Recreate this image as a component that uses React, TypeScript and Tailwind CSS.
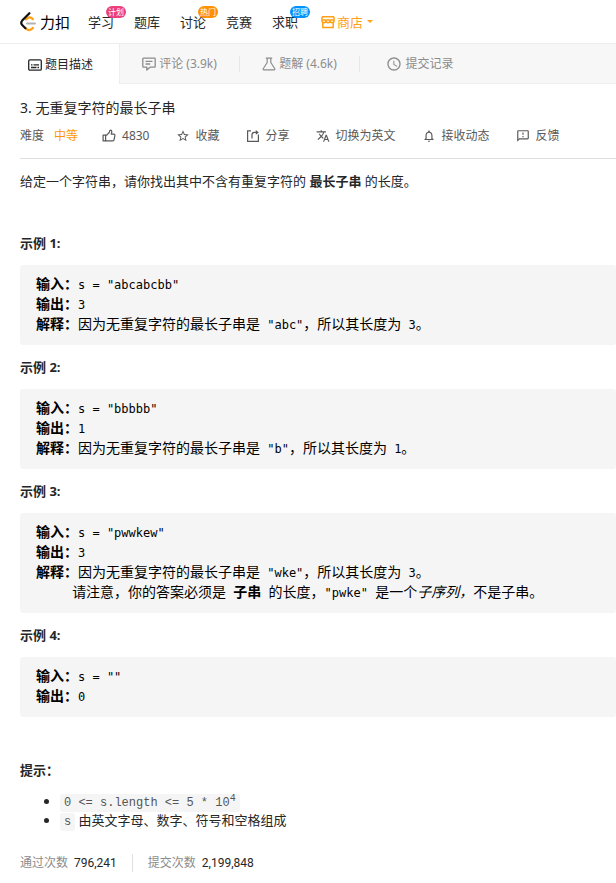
import React from 'react';
import { MdAccessTime, MdNotificationsNone, MdOutlineFeedback, MdStarBorder, MdTranslate } from 'react-icons/md';

function LogoMark() {
  return (
    <svg viewBox="0 0 16 20" className="w-4 h-5" fill="none" strokeWidth="2.2" strokeLinecap="round">
      <path d="M6 7.500l1.200-1.100c1.500-1.300 3.400-1.300 4.800 0l.8.8" stroke="#ffa116" />
      <path d="M5.200 15.700l1.200 1.100c1.800 1.500 4 1.400 5.400.1l1-1" stroke="#ffa116" />
      <path d="M7 11.500h8" stroke="#b3b3b3" strokeWidth="1.9" />
      <path d="M9.400 1.200L2.200 8.600c-1.200 1.400-1.200 3.100 0 4.500l3.200 3.100" stroke="#111" />
    </svg>
  );
}

function ShopIcon() {
  return (
    <svg viewBox="0 0 14 14" className="w-3.5 h-3.5" fill="none" stroke="currentColor" strokeWidth="1.5">
      <path d="M1 1.800h12M.8 5h12.400M1 1.800v4c0 1.200.8 1.900 1.900 1.900S4.800 7 4.800 6M13 1.800v4c0 1.200-.8 1.900-1.900 1.900S9.200 7 9.200 6M4.800 5v.8c0 1.200.9 1.900 2.200 1.900s2.200-.7 2.200-1.900V5" />
      <path d="M1.800 7.600v4.900h10.400V7.600" />
    </svg>
  );
}

function DescriptionIcon() {
  return (
    <svg viewBox="0 0 14 12" className="w-3.5 h-3" fill="none" stroke="currentColor" strokeWidth="1.3">
      <rect x=".7" y=".9" width="12.600" height="10.200" rx="1.200" />
      <path d="M3 5.900h1.500M5.500 5.900H11M3 8.500h5.500M9.500 8.500H11" />
    </svg>
  );
}

function CommentIcon() {
  return (
    <svg viewBox="0 0 14 14" className="w-3.5 h-3.5" fill="none" stroke="currentColor" strokeWidth="1.3" strokeLinejoin="round">
      <path d="M1.500 1.200h11c.4 0 .7.300.7.700v7.600c0 .4-.3.700-.7.700H8l-3.200 2.900v-2.900H1.500c-.4 0-.7-.3-.7-.7V1.900c0-.4.3-.7.7-.7z" />
      <path d="M3.500 4.400h7M3.500 7h4.700" />
    </svg>
  );
}

function FlaskIcon() {
  return (
    <svg viewBox="0 0 14 14" className="w-3.5 h-3.5" fill="none" stroke="currentColor" strokeWidth="1.2" strokeLinejoin="round">
      <path d="M3.800 1.200h6.400M5.200 1.200v4.300L1.200 11.800c-.3.500 0 1 .6 1h10.400c.6 0 .9-.5.6-1L8.800 5.500V1.200" />
    </svg>
  );
}

function LikeIcon() {
  return (
    <svg viewBox="0 0 14 14" className="w-3.5 h-3.5" fill="none" stroke="currentColor" strokeWidth="1.2" strokeLinejoin="round">
      <path d="M1.100 6.100h2.500v5.800H1.100z" />
      <path d="M3.600 6.200h1.100l2.500-2.700c.3-.4.400-.8.400-1.300 0-.8.500-1.100 1-1.100.8 0 1.200.7 1.200 1.600 0 .9-.3 1.700-.6 2.400h2.500c.8 0 1.300.6 1.200 1.300l-.8 4.300c-.1.700-.6 1.200-1.400 1.200H3.600" />
    </svg>
  );
}

function ShareIcon() {
  return (
    <svg viewBox="0 0 14 14" className="w-3.5 h-3.5" fill="none" stroke="currentColor" strokeWidth="1.2">
      <path d="M5 1.800H1.600v10.600h10.800V5.500" />
      <path d="M6 9.500V5.800c0-1.500.9-2.400 2.400-2.400h2.200" />
      <path d="M9.800 1l3 2.400-3 2.400z" fill="currentColor" stroke="none" />
    </svg>
  );
}

const navLinks = [
  { label: '学习', badge: '计划', color: 'bg-[#ec407a]' },
  { label: '题库' },
  { label: '讨论', badge: '热门', color: 'bg-[#ff9100]' },
  { label: '竞赛' },
  { label: '求职', badge: '招聘', color: 'bg-[#0091ff]' },
];

const tabs = [
  { label: '评论 (3.9k)', icon: <CommentIcon />, divider: true },
  { label: '题解 (4.6k)', icon: <FlaskIcon />, divider: true },
  { label: '提交记录', icon: <MdAccessTime className="w-4 h-4" />, divider: false },
];

const actions = [
  { label: '4830', icon: <LikeIcon /> },
  { label: '收藏', icon: <MdStarBorder className="w-3.5 h-3.5" /> },
  { label: '分享', icon: <ShareIcon /> },
  { label: '切换为英文', icon: <MdTranslate className="w-3.5 h-3.5" /> },
  { label: '接收动态', icon: <MdNotificationsNone className="w-3.5 h-3.5" /> },
  { label: '反馈', icon: <MdOutlineFeedback className="w-3.5 h-3.5" /> },
];

// Latin runs inside a code sample
function L({ children }: { children: React.ReactNode }) {
  return <span className="text-xs leading-none">{children}</span>;
}

function Example({ index, children }: { index: number; children: React.ReactNode }) {
  return (
    <section>
      <h2 className="h-11 flex items-center font-bold">示例 {index}:</h2>
      <pre className="bg-[#f5f5f5] rounded-[3px] pt-[9px] pb-[11px] pl-4 text-sm leading-5 text-black overflow-hidden font-['DejaVu_Sans_Mono','Noto_Sans_CJK_SC',monospace]">
        {children}
      </pre>
    </section>
  );
}

export default function App() {
  return (
    <div className="bg-white text-[#262626] text-[13px] leading-5 font-['Noto_Sans','Noto_Sans_CJK_SC',sans-serif]">
      <header className="h-11 flex items-center border-b border-[#eee] pl-5">
        <a href="#" className="flex items-center gap-1 w-[68px] text-[15px] text-black">
          <LogoMark />
          力扣
        </a>
        <nav className="flex items-center gap-5">
          {navLinks.map((item) => (
            <a key={item.label} href="#" className="relative">
              {item.label}
              {item.badge && (
                <span className={`absolute -top-1.5 left-[18px] h-3 w-5 rounded-full text-center text-[8px] leading-3 text-white ${item.color}`}>
                  {item.badge}
                </span>
              )}
            </a>
          ))}
          <button className="flex items-center ml-[3px] text-[#ffa116]">
            <ShopIcon />
            <span className="ml-0.5">商店</span>
            <svg viewBox="0 0 6 3" className="w-1.5 h-[3px] ml-1" fill="currentColor">
              <path d="M0 0h6L3 3z" />
            </svg>
          </button>
        </nav>
      </header>

      {/* Tabs */}
      <div className="h-10 flex bg-[#f7f7f7] border-b border-[#eee] text-xs text-[#8c8c8c]">
        <button className="w-30 h-10 flex items-center justify-center gap-[3px] pt-px pl-0.5 bg-white border-r border-[#eee] text-[#262626]">
          <DescriptionIcon />
          题目描述
        </button>
        {tabs.map((tab) => (
          <button key={tab.label} className="w-30 flex items-center">
            <span className="flex-1 flex items-center justify-center gap-[3px] pt-px whitespace-nowrap">
              {tab.icon}
              {tab.label}
            </span>
            {tab.divider && <span className="w-px h-4 bg-[#e8e8e8]" />}
          </button>
        ))}
      </div>

      <main className="pl-5 pt-3.5">
        <h1 className="text-sm leading-5">3. 无重复字符的最长子串</h1>

        <div className="flex items-center text-xs leading-5 text-[#595959] mt-2 pb-3 border-b border-[#dedede] whitespace-nowrap">
          <span>难度</span>
          <span className="ml-2.5 text-[#ff9800]">中等</span>
          <div className="flex gap-[26px] ml-6">
            {actions.map((action) => (
              <button key={action.label} className="flex items-center gap-1.5">
                {action.icon}
                {action.label}
              </button>
            ))}
          </div>
        </div>

        <p className="mt-3 mb-[30px]">
          给定一个字符串，请你找出其中不含有重复字符的 <strong>最长子串</strong> 的长度。
        </p>

        <Example index={1}>
          <b>输入：</b><L>s = "abcabcbb"{'\n'}</L>
          <b>输出：</b><L>3{'\n'}</L>
          <b>解释：</b>因为无重复字符的最长子串是<L> "abc"</L>，所以其长度为<L> 3</L>。
        </Example>

        <Example index={2}>
          <b>输入：</b><L>s = "bbbbb"{'\n'}</L>
          <b>输出：</b><L>1{'\n'}</L>
          <b>解释：</b>因为无重复字符的最长子串是<L> "b"</L>，所以其长度为<L> 1</L>。
        </Example>

        <Example index={3}>
          <b>输入：</b><L>s = "pwwkew"{'\n'}</L>
          <b>输出：</b><L>3{'\n'}</L>
          <b>解释：</b>因为无重复字符的最长子串是<L> "wke"</L>，所以其长度为<L> 3</L>。
          <L>{'\n     '}</L>请注意，你的答案必须是<L> </L><b>子串</b><L> </L>的长度，<L>"pwke" </L>是一个<em>子序列，</em>不是子串。
        </Example>

        <Example index={4}>
          <b>输入：</b><L>s = ""{'\n'}</L>
          <b>输出：</b><L>0</L>
        </Example>

        <h2 className="font-bold mt-[43px]">提示：</h2>
        <ul className="list-disc pl-10 mt-3 leading-[19px]">
          <li>
            <code className="bg-[#f5f5f5] rounded-[3px] px-1 py-0.5 text-xs text-[#555] font-['Liberation_Mono',monospace]">
              {'0 <= s.length <= 5 * 10'}<sup className="text-[10px]">4</sup>
            </code>
          </li>
          <li>
            <code className="bg-[#f5f5f5] rounded-[3px] px-1 py-0.5 text-xs text-[#555] font-['Liberation_Mono',monospace]">s</code>{' '}
            由英文字母、数字、符号和空格组成
          </li>
        </ul>

        <div className="flex items-center mt-[23px] pb-3 text-xs leading-5 text-[#8c8c8c]">
          <span>通过次数</span>
          <span className="ml-1.5 text-[#262626] font-[Roboto,sans-serif]">796,241</span>
          <span className="w-px h-[18px] mx-[15px] bg-[#e0e0e0]" />
          <span>提交次数</span>
          <span className="ml-1.5 text-[#262626] font-[Roboto,sans-serif]">2,199,848</span>
        </div>
      </main>
    </div>
  );
}
